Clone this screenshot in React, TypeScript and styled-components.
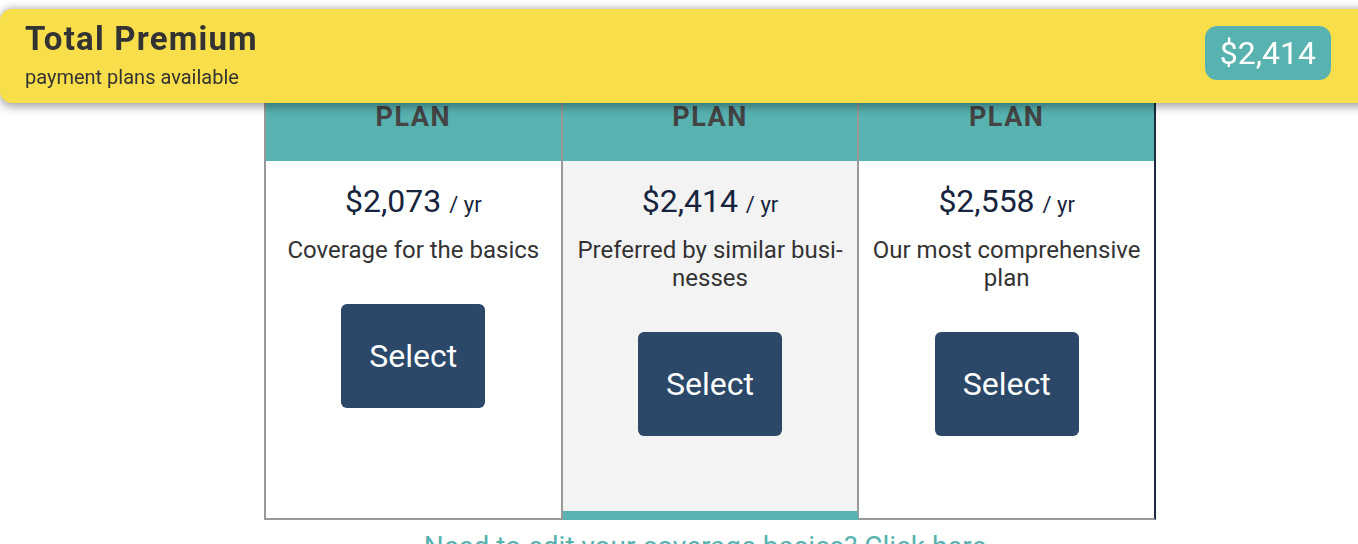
import React from 'react'
import styled, { createGlobalStyle } from 'styled-components'

const GlobalStyle = createGlobalStyle`
  html, body {
    margin: 0;
    padding: 0;
    background: #ffffff;
    font-family: Roboto, "Liberation Sans", Arial, sans-serif;
    overflow: hidden;
  }
`

type Plan = {
  price: string
  blurb: string
  featured?: boolean
}

const plans: Plan[] = [
  { price: '$2,073', blurb: 'Coverage for the basics' },
  { price: '$2,414', blurb: 'Preferred by similar busi-\nnesses', featured: true },
  { price: '$2,558', blurb: 'Our most comprehensive plan' },
]

export default function App() {
  return (
    <>
      <GlobalStyle />
      <Banner>
        <BannerText>
          <BannerTitle>Total Premium</BannerTitle>
          <BannerSub>payment plans available</BannerSub>
        </BannerText>
        <TotalBadge>$2,414</TotalBadge>
      </Banner>
      <Main>
        <PlanTable>
          {plans.map((plan, i) => (
            <PlanColumn key={plan.price} $featured={plan.featured} $last={i === plans.length - 1}>
              <PlanHeader>PLAN</PlanHeader>
              <PlanBody $featured={plan.featured}>
                <Price>
                  {plan.price} <Per>/ yr</Per>
                </Price>
                <Blurb>{plan.blurb}</Blurb>
                <SelectButton>Select</SelectButton>
              </PlanBody>
            </PlanColumn>
          ))}
        </PlanTable>
        <EditLink>Need to edit your coverage basics? Click here</EditLink>
      </Main>
    </>
  )
}

const Banner = styled.div`
  position: fixed;
  top: 9px;
  left: 0;
  right: -20px;
  height: 94px;
  box-sizing: border-box;
  padding: 0 47px 0 25px;
  background: #f8de4a;
  border-radius: 12px 0 0 12px;
  box-shadow: 0 4px 10px rgba(0, 0, 0, 0.35), 0 -3px 6px rgba(0, 0, 0, 0.15);
  display: flex;
  align-items: center;
  justify-content: space-between;
  z-index: 10;
`

const BannerText = styled.div`
  display: flex;
  flex-direction: column;
`

const BannerTitle = styled.div`
  font-size: 33px;
  font-weight: 700;
  letter-spacing: 1.2px;
  color: #333333;
  line-height: 38px;
  margin-top: -4px;
`

const BannerSub = styled.div`
  font-size: 20px;
  color: #333333;
  line-height: 24px;
  margin-top: 7px;
`

const TotalBadge = styled.div`
  background: #57b2b0;
  color: #ffffff;
  font-size: 32px;
  line-height: 54px;
  padding: 0 15px;
  border-radius: 12px;
  margin-top: -6px;
`

const Main = styled.div`
  padding-top: 80px;
  margin-left: 264px;
  width: 892px;
`

const PlanTable = styled.div`
  display: grid;
  grid-template-columns: 1fr 1fr 1fr;
  border-left: 2px solid #999999;
`

const PlanColumn = styled.div<{ $featured?: boolean; $last?: boolean }>`
  display: flex;
  flex-direction: column;
  border-right: 2px solid ${(p) => (p.$last ? '#1b2a3e' : '#999999')};
  border-bottom: ${(p) => (p.$featured ? '9px solid #57b2b0' : '2px solid #999999')};
`

const PlanHeader = styled.div`
  background: #57b2b0;
  padding: 23px 0 30px;
  text-align: center;
  font-size: 27px;
  font-weight: 700;
  letter-spacing: 1.5px;
  line-height: 28px;
  color: #444444;
`

const PlanBody = styled.div<{ $featured?: boolean }>`
  flex: 1;
  min-height: 350px;
  background: ${(p) => (p.$featured ? '#f3f3f3' : '#ffffff')};
  display: flex;
  flex-direction: column;
  align-items: center;
  padding: 21px 10px 0;
  box-sizing: border-box;
`

const Price = styled.div`
  font-size: 32px;
  line-height: 38px;
  color: #16243d;
`

const Per = styled.span`
  font-size: 22px;
`

const Blurb = styled.div`
  margin-top: 12px;
  font-size: 24px;
  line-height: 28px;
  color: #333333;
  text-align: center;
  white-space: pre-line;
  max-width: 280px;
`

const SelectButton = styled.button`
  margin-top: 40px;
  width: 144px;
  height: 104px;
  border: none;
  border-radius: 6px;
  background: #2c4868;
  color: #ffffff;
  font-family: Roboto, "Liberation Sans", Arial, sans-serif;
  font-size: 32px;
  cursor: pointer;
`

const EditLink = styled.div`
  margin-top: 10px;
  padding-right: 10px;
  text-align: center;
  color: #57b2b0;
  font-size: 28px;
  line-height: 34px;
`
